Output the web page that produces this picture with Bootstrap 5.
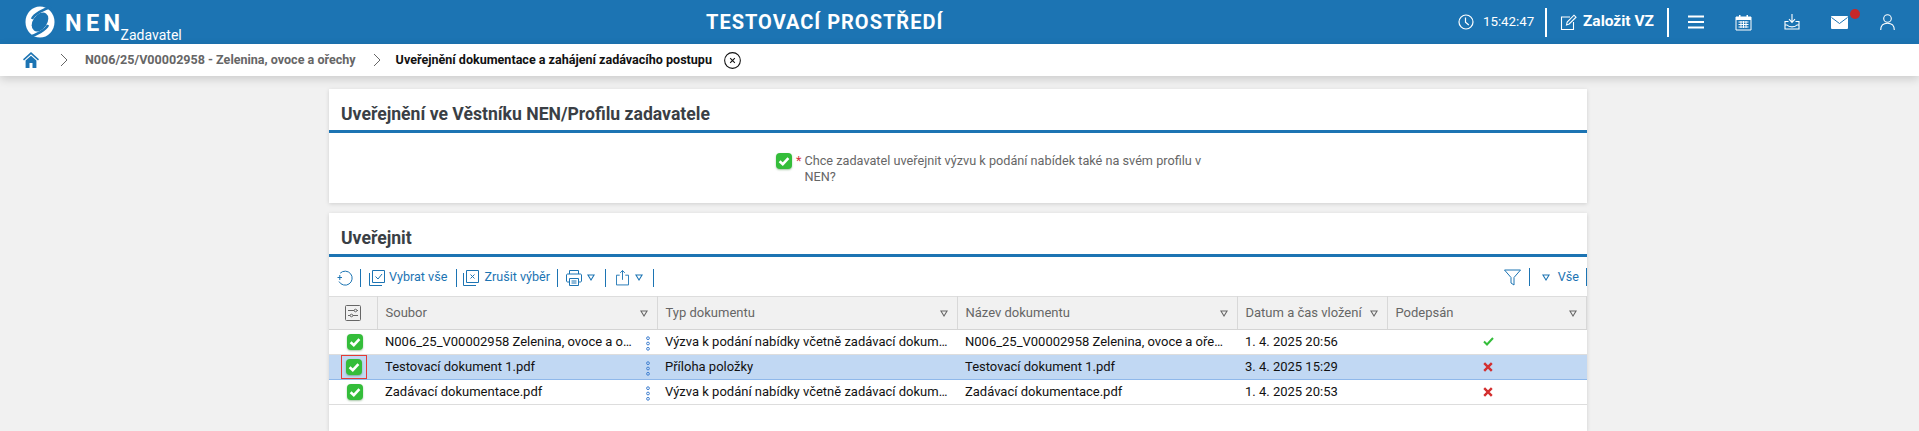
<!DOCTYPE html>
<html lang="cs">
<head>
    <meta charset="UTF-8">
    <meta name="viewport" content="width=device-width, initial-scale=1.0">
    <title>NEN Zadavatel</title>
    <link href="https://cdn.jsdelivr.net/npm/bootstrap@5.3.0/dist/css/bootstrap.min.css" rel="stylesheet">
    <style>
        html, body { height: 431px; overflow: hidden; }
        body { background: #f1f1f1; font-family: Roboto, "Liberation Sans", sans-serif; font-size: 13px; color: #222; }
        svg { display: block; flex: none; }
        .top-bar { height: 44px; background: #1c74b3; color: #fff; padding-left: 25px; }
        .logo-box { width: 160px; height: 32px; }
        .logo-nen { font-size: 23.5px; font-weight: 700; letter-spacing: 4.4px; line-height: 1; margin-left: 10px; margin-top: 6px; }
        .logo-role { font-size: 14px; line-height: 1; margin-left: -4px; margin-top: 22px; }
        .env-title { position: absolute; left: 706px; top: 10px; font-size: 20px; font-weight: 700; letter-spacing: 1px; line-height: 24px; }
        .top-right { margin-left: auto; }
        .clock-time { font-size: 13.3px; margin-left: 9px; width: 62px; }
        .top-sep { width: 2px; height: 29px; background: #fff; }
        .new-btn { font-size: 15.5px; font-weight: 700; margin: 0 13px 0 6px; }
        .top-ico { position: relative; }
        .mail-dot { position: absolute; left: 19px; top: -7px; width: 10px; height: 10px; border-radius: 50%; background: #c62828; }
        .crumb-bar { height: 32px; background: #fff; padding-left: 23px; box-shadow: 0 3px 10px rgba(0,0,0,.16); position: relative; }
        .crumb-link { color: #666; font-weight: 700; font-size: 12.55px; }
        .crumb-now { color: #111; font-weight: 700; font-size: 12.55px; }
        .page-wrap { margin-left: 329px; width: 1258px; padding-top: 13px; height: 355px; }
        .panel-box { background: #fff; box-shadow: 0 1px 4px rgba(0,0,0,.14); margin-bottom: 10px; }
        .panel-fill { margin-bottom: 0; overflow: hidden; }
        .panel-head { height: 44px; border-bottom: 3px solid #1c74b3; padding: 13px 12px 0; font-size: 17.6px; font-weight: 700; color: #3a3f45; line-height: 24px; }
        .panel-q { height: 70px; padding-top: 20px; padding-left: 447px; color: #666; font-size: 12.7px; line-height: 16px; }
        .req-mark { color: #d32f3f; margin: 0 3px 0 4px; }
        .q-text { width: 400px; }
        .check-box { width: 16px; height: 16px; border-radius: 4px; background: #34bd3a; box-shadow: 0 1px 2px rgba(0,90,0,.35); display: flex; align-items: center; justify-content: center; }
        .tool-row { height: 39px; padding: 2px 0 0 8px; color: #1c74b3; font-size: 12.6px; }
        .tool-sep { width: 1px; height: 18px; background: #1c74b3; }
        .doc-table { table-layout: fixed; width: 1258px; margin: 0; font-size: 13px; border-collapse: collapse; }
        .doc-table th { height: 33px; padding: 0 0 0 8px; background: #f1f1f1; color: #666; font-weight: 400; border: 0; border-top: 1px solid #ddd; border-bottom: 1px solid #d4d4d4; border-right: 1px solid #d8d8d8; position: relative; vertical-align: middle; }
        .doc-table td { height: 25px; padding: 0 8px; color: #111; border: 0; border-bottom: 1px solid #ddd; vertical-align: middle; white-space: nowrap; background: transparent; }
        .doc-table .c-sel { padding: 0; }
        .doc-table tr.row-on td { background: #c1d8f3; border-bottom-color: #8fb8ea; }
        .c-sel { width: 48px; }
        .c-file { width: 280px; }
        .c-type { width: 300px; }
        .c-name { width: 280px; }
        .c-date { width: 150px; }
        .sort-tri { position: absolute; right: 9px; top: 13px; }
        .file-cell { position: relative; }
        .more-dots { position: absolute; right: 6px; top: 6px; }
        .focus-frame { width: 26px; height: 24px; border: 1px solid #e53935; margin-left: 12px; display: flex; align-items: center; justify-content: center; }
        .sel-wrap { display: flex; justify-content: center; margin-left: 3px; margin-top: -1px; }
        .sign-ico { display: flex; justify-content: center; margin-left: 3px; margin-top: -1px; }
    </style>
</head>
<body>
    <svg width="0" height="0" class="position-absolute">
        <symbol id="tick" viewBox="0 0 16 16"><path d="M3.6 8.2 6.8 11.2 12.4 5.2" fill="none" stroke="#fff" stroke-width="2.6"/></symbol>
        <symbol id="tri" viewBox="0 0 9 8"><path d="M1 1.2H8L4.5 6.8Z" fill="none" stroke="currentColor" stroke-width="1.2"/></symbol>
        <symbol id="dots" viewBox="0 0 6 15"><g fill="none" stroke="#3f7fd0" stroke-width="1"><circle cx="3" cy="2.2" r="1.4"/><circle cx="3" cy="7.5" r="1.4"/><circle cx="3" cy="12.8" r="1.4"/></g></symbol>
        <symbol id="cross" viewBox="0 0 10 10"><path d="M1.2 1.2 8.8 8.8M8.8 1.2 1.2 8.8" stroke="#d32f2f" stroke-width="2.4"/></symbol>
    </svg>

    <header class="top-bar d-flex align-items-center position-relative">
        <div class="logo-box d-flex align-items-start">
            <svg width="30" height="32" viewBox="0 0 30 32">
                <ellipse cx="15" cy="16" rx="14.500" ry="15.500" fill="#fff"/>
                <ellipse cx="15" cy="16" rx="7" ry="10.500" transform="rotate(35 15 16)" fill="#1c74b3"/>
                <path d="M26 1C19 3 9 8 7 13M23 19C21 24 11 29 4 31" fill="none" stroke="#1c74b3" stroke-width="2.400"/>
            </svg>
            <span class="logo-nen">NEN</span>
            <span class="logo-role">Zadavatel</span>
        </div>
        <div class="env-title">TESTOVACÍ PROSTŘEDÍ</div>
        <div class="top-right d-flex align-items-center">
            <svg width="16" height="16" viewBox="0 0 16 16" fill="none" stroke="#fff" stroke-width="1.200"><circle cx="8" cy="8" r="7"/><path d="M7.500 3.500V8.200L10.800 11"/></svg>
            <span class="clock-time">15:42:47</span>
            <span class="top-sep"></span>
            <span class="d-flex align-items-center" style="margin-left:13px">
                <svg width="17" height="17" viewBox="0 0 17 17" fill="none" stroke="#fff" stroke-width="1.100"><path d="M10 3H1.500V15.500H13.500V8"/><path d="M6.500 11 7.200 8 14 1.200 16 3.200 9.200 10Z"/></svg>
                <span class="new-btn">Založit VZ</span>
            </span>
            <span class="top-sep"></span>
            <span class="d-flex align-items-center">
                <svg style="margin-left:19px" width="16" height="14" viewBox="0 0 16 14" stroke="#fff" stroke-width="2"><path d="M0 1.500H16M0 7H16M0 12.500H16"/></svg>
                <svg style="margin-left:31px" width="17" height="17" viewBox="0 0 17 17"><path d="M1 3H16V16H1Z" fill="none" stroke="#fff"/><path d="M1 3H16V6H1Z M4 1H5.500V4H4Z M11.500 1H13V4H11.500Z" fill="#fff"/><path d="M3.500 8H13.500M3.500 10.500H13.500M3.500 13H13.500M6 7V14M8.500 7V14M11 7V14" stroke="#fff" stroke-width="1"/></svg>
                <svg style="margin-left:32px" width="16" height="16" viewBox="0 0 16 16" fill="none" stroke="#fff" stroke-width="1.100"><path d="M8 0V8M5 5.200 8 8.400 11 5.200"/><path d="M4.500 7.500H1V15H15V7.500H11.500"/><path d="M1 11H3C5 13.500 11 13.500 13 11H15"/></svg>
                <span class="top-ico" style="margin-left:31px"><svg width="17" height="13" viewBox="0 0 17 13"><rect width="17" height="13" rx="1" fill="#fff"/><path d="M0.500 1.500 8.500 7.500 16.500 1.500" fill="none" stroke="#1c74b3"/></svg><span class="mail-dot"></span></span>
                <svg style="margin-left:32px;margin-right:24px" width="15" height="16" viewBox="0 0 15 16" fill="none" stroke="#fff" stroke-width="1.100"><circle cx="7.500" cy="4.500" r="3.800"/><path d="M.7 16C.7 11.500 3.500 9.200 7.500 9.200S14.300 11.500 14.300 16"/></svg>
            </span>
        </div>
    </header>

    <nav class="crumb-bar d-flex align-items-center">
        <svg width="16" height="16" viewBox="0 0 16 16"><path d="M8 0 16 7.200 15 8.400 8 2.200 1 8.400 0 7.200Z" fill="#1c74b3"/><path d="M2.600 8.600 8 3.800 13.400 8.600V16H9.500V11H6.500V16H2.600Z" fill="#1c74b3"/></svg>
        <svg style="margin-left:21px" width="8" height="14" viewBox="0 0 8 14" fill="none" stroke="#666"><path d="M1 1 7 7 1 13"/></svg>
        <span class="crumb-link" style="margin-left:17px">N006/25/V00002958 - Zelenina, ovoce a ořechy</span>
        <svg style="margin-left:17px" width="8" height="14" viewBox="0 0 8 14" fill="none" stroke="#666"><path d="M1 1 7 7 1 13"/></svg>
        <span class="crumb-now" style="margin-left:15px">Uveřejnění dokumentace a zahájení zadávacího postupu</span>
        <svg style="margin-left:12px" width="17" height="17" viewBox="0 0 16 16" fill="none" stroke="#111"><circle cx="8" cy="8" r="7.400"/><path d="M5.800 5.800 10.200 10.200M10.200 5.800 5.800 10.200"/></svg>
    </nav>

    <main class="page-wrap d-flex flex-column">
        <section class="panel-box">
            <div class="panel-head">Uveřejnění ve Věstníku NEN/Profilu zadavatele</div>
            <div class="panel-q d-flex align-items-start">
                <span class="check-box"><svg width="16" height="16"><use href="#tick"/></svg></span>
                <span class="req-mark">*</span>
                <span class="q-text">Chce zadavatel uveřejnit výzvu k podání nabídek také na svém profilu v NEN?</span>
            </div>
        </section>

        <section class="panel-box panel-fill flex-grow-1">
            <div class="panel-head">Uveřejnit</div>
            <div class="tool-row d-flex align-items-center">
                <svg width="16" height="16" viewBox="0 0 16 16" fill="none" stroke="#1c74b3"><path d="M3.200 3.200A7 7 0 1 1 2 11.500"/><path d="M0.500 7.500H5M2.800 5V10" stroke-width="1"/></svg>
                <span class="tool-sep" style="margin-left:7px"></span>
                <svg class="ms-2" width="16" height="16" viewBox="0 0 16 16" fill="none" stroke="#1c74b3"><path d="M3.500.5H15.500V12.500H3.500Z"/><path d="M.5 3V15.500H13"/><path d="M6.500 6.500 9 9 13 4"/></svg>
                <span class="ms-1">Vybrat vše</span>
                <span class="tool-sep" style="margin-left:9px"></span>
                <svg style="margin-left:6px" width="16" height="16" viewBox="0 0 16 16" fill="none" stroke="#1c74b3"><path d="M3.500.5H15.500V12.500H3.500Z"/><path d="M.5 3V15.500H13"/><path d="M7.500 4.500 11.500 8.500M11.500 4.500 7.500 8.500"/></svg>
                <span style="margin-left:5px">Zrušit výběr</span>
                <span class="tool-sep" style="margin-left:7px"></span>
                <svg class="ms-2" width="16" height="16" viewBox="0 0 16 16" fill="none" stroke="#1c74b3"><path d="M3.500 4V.5H12.500V4M3.500 12H1.500C1 12 .5 11.500 .5 11V5C.5 4.500 1 4 1.500 4H14.500C15 4 15.500 4.500 15.500 5V11C15.500 11.500 15 12 14.500 12H12.500"/><path d="M3.500 8.500H12.500V15.500H3.500ZM5.500 11H10.500M5.500 13H10.500"/></svg>
                <svg style="margin-left:5px" width="8" height="7"><use href="#tri"/></svg>
                <span class="tool-sep" style="margin-left:10px"></span>
                <svg style="margin-left:10px" width="13" height="17" viewBox="0 0 14 17" fill="none" stroke="#1c74b3"><path d="M4 6H.5V16.500H13.500V6H10"/><path d="M7 11V1M4.500 3.500 7 1 9.500 3.500"/></svg>
                <svg style="margin-left:6px" width="8" height="7"><use href="#tri"/></svg>
                <span class="tool-sep" style="margin-left:10px"></span>
                <span class="ms-auto d-flex align-items-center">
                    <svg width="17" height="17" viewBox="0 0 17 17" fill="none" stroke="#1c74b3"><path d="M.5 1H16.500L10 8.500V16L7 14V8.500Z"/></svg>
                    <span class="tool-sep ms-2"></span>
                    <svg style="margin-left:12px" width="8" height="7"><use href="#tri"/></svg>
                    <span style="margin-left:8px">Vše</span>
                    <span class="tool-sep" style="margin-left:7px"></span>
                </span>
            </div>
            <table class="table doc-table">
                <thead>
                    <tr>
                        <th class="c-sel"><svg class="mx-auto" width="16" height="16" viewBox="0 0 16 16" fill="none" stroke="#666"><rect x=".5" y=".5" width="15" height="15" rx="1"/><path d="M3 5.500H9M12 5.500H13M3 10.500H5M8 10.500H13"/><circle cx="10.500" cy="5.500" r="1.300"/><circle cx="6.500" cy="10.500" r="1.300"/></svg></th>
                        <th class="c-file">Soubor<svg class="sort-tri" width="8" height="7"><use href="#tri"/></svg></th>
                        <th class="c-type">Typ dokumentu<svg class="sort-tri" width="8" height="7"><use href="#tri"/></svg></th>
                        <th class="c-name">Název dokumentu<svg class="sort-tri" width="8" height="7"><use href="#tri"/></svg></th>
                        <th class="c-date">Datum a čas vložení<svg class="sort-tri" width="8" height="7"><use href="#tri"/></svg></th>
                        <th>Podepsán<svg class="sort-tri" width="8" height="7"><use href="#tri"/></svg></th>
                    </tr>
                </thead>
                <tbody>
                    <tr>
                        <td class="c-sel"><div class="sel-wrap"><span class="check-box"><svg width="16" height="16"><use href="#tick"/></svg></span></div></td>
                        <td class="file-cell">N006_25_V00002958 Zelenina, ovoce a o…<svg class="more-dots" width="6" height="15"><use href="#dots"/></svg></td>
                        <td>Výzva k podání nabídky včetně zadávací dokum…</td>
                        <td>N006_25_V00002958 Zelenina, ovoce a oře…</td>
                        <td>1. 4. 2025 20:56</td>
                        <td><div class="sign-ico"><svg width="11" height="9" viewBox="0 0 11 9" fill="none" stroke="#34bd3a" stroke-width="2"><path d="M1 4.500 4 7.500 10 1"/></svg></div></td>
                    </tr>
                    <tr class="row-on">
                        <td class="c-sel"><div class="focus-frame"><span class="check-box"><svg width="16" height="16"><use href="#tick"/></svg></span></div></td>
                        <td class="file-cell">Testovací dokument 1.pdf<svg class="more-dots" width="6" height="15"><use href="#dots"/></svg></td>
                        <td>Příloha položky</td>
                        <td>Testovací dokument 1.pdf</td>
                        <td>3. 4. 2025 15:29</td>
                        <td><div class="sign-ico"><svg width="10" height="10"><use href="#cross"/></svg></div></td>
                    </tr>
                    <tr>
                        <td class="c-sel"><div class="sel-wrap"><span class="check-box"><svg width="16" height="16"><use href="#tick"/></svg></span></div></td>
                        <td class="file-cell">Zadávací dokumentace.pdf<svg class="more-dots" width="6" height="15"><use href="#dots"/></svg></td>
                        <td>Výzva k podání nabídky včetně zadávací dokum…</td>
                        <td>Zadávací dokumentace.pdf</td>
                        <td>1. 4. 2025 20:53</td>
                        <td><div class="sign-ico"><svg width="10" height="10"><use href="#cross"/></svg></div></td>
                    </tr>
                </tbody>
            </table>
        </section>
    </main>

    <script src="https://cdn.jsdelivr.net/npm/bootstrap@5.3.0/dist/js/bootstrap.bundle.min.js"></script>
</body>
</html>
